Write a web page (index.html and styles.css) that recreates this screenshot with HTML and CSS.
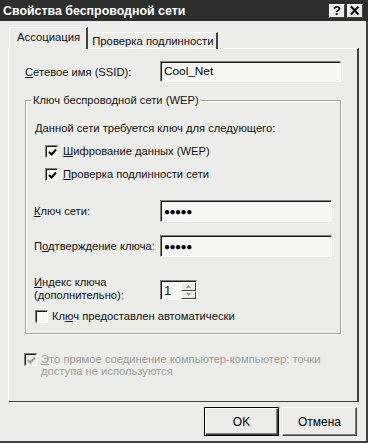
FILE: index.html
```html
<!DOCTYPE html>
<html lang="ru">
<head>
<meta charset="utf-8">
<title>Свойства беспроводной сети</title>
<link rel="stylesheet" href="styles.css">
</head>
<body>
<div class="window">
  <div class="titlebar">
    <span class="title">Свойства беспроводной сети</span>
    <div class="tb-buttons">
      <span class="tb-btn help">?</span>
      <span class="tb-btn close"><svg width="10" height="9" viewBox="0 0 10 9"><path d="M1 0.5 L8.5 8.5 M8.5 0.5 L1 8.5" stroke="#000" stroke-width="2"/></svg></span>
    </div>
  </div>
  <div class="body">
    <div class="tabs">
      <div class="tab active">Ассоциация</div>
      <div class="tab">Проверка подлинности</div>
    </div>
    <div class="panel">
      <div class="row ssid">
        <span class="label"><u>С</u>етевое имя (SSID):</span>
        <span class="input w180">Cool_Net</span>
      </div>
      <fieldset class="group">
        <legend>Ключ беспроводной сети (WEP)</legend>
        <p class="note">Данной сети требуется ключ для следующего:</p>
        <div class="check c1">
          <span class="box"><svg width="9" height="9" viewBox="0 0 9 9"><path d="M1 4 L3.5 6.5 L8 1.5" stroke="#000" stroke-width="2" fill="none"/></svg></span>
          <span class="clabel"><u>Ш</u>ифрование данных (WEP)</span>
        </div>
        <div class="check c2">
          <span class="box"><svg width="9" height="9" viewBox="0 0 9 9"><path d="M1 4 L3.5 6.5 L8 1.5" stroke="#000" stroke-width="2" fill="none"/></svg></span>
          <span class="clabel"><u>П</u>роверка подлинности сети</span>
        </div>
        <div class="row key r1">
          <span class="label klabel"><u>К</u>люч сети:</span>
          <span class="input w172 dots">●●●●●</span>
        </div>
        <div class="row key r2">
          <span class="label klabel">П<u>о</u>дтверждение ключа:</span>
          <span class="input w172 dots">●●●●●</span>
        </div>
        <div class="row index">
          <span class="label klabel two"><u>И</u>ндекс ключа<br>(дополнительно):</span>
          <div class="spinner">
            <span class="spin-text">1</span>
            <div class="spin-btns">
              <span class="spin-btn"><svg width="5" height="3" viewBox="0 0 5 3"><path d="M2.5 0 L5 3 L0 3 Z" fill="#9a9a9a"/></svg></span>
              <span class="spin-btn"><svg width="5" height="3" viewBox="0 0 5 3"><path d="M0 0 L5 0 L2.5 3 Z" fill="#9a9a9a"/></svg></span>
            </div>
          </div>
        </div>
        <div class="check auto">
          <span class="box"></span>
          <span class="clabel">Кл<u>ю</u>ч предоставлен автоматически</span>
        </div>
      </fieldset>
      <div class="check adhoc">
        <span class="box dis"><svg width="9" height="9" viewBox="0 0 9 9"><path d="M1 4 L3.5 6.5 L8 1.5" stroke="#9c9c9c" stroke-width="2" fill="none"/></svg></span>
        <span class="clabel disabled"><u>Э</u>то прямое соединение компьютер-компьютер; точки<br>доступа не используются</span>
      </div>
    </div>
    <div class="buttons">
      <span class="btn default">OK</span>
      <span class="btn">Отмена</span>
    </div>
  </div>
</div>
</body>
</html>
```
FILE: styles.css
```css
html, body {
  margin: 0;
  padding: 0;
  background: #ececea;
}
body {
  width: 368px;
  height: 443px;
  overflow: hidden;
  font-family: "Liberation Sans", Arial, sans-serif;
  font-size: 11.2px;
  color: #111;
}
.window {
  width: 368px;
  height: 443px;
  display: flex;
  flex-direction: column;
}
.titlebar {
  height: 21px;
  flex: 0 0 21px;
  background: #2e2e2e;
  display: flex;
  align-items: center;
  justify-content: space-between;
}
.title {
  color: #fff;
  font-weight: bold;
  font-size: 12.4px;
  padding-left: 3px;
}
.tb-buttons {
  display: flex;
  gap: 2px;
  margin-right: 5px;
}
.tb-btn {
  width: 14px;
  height: 12px;
  background: #ececea;
  border: 1px solid;
  border-color: #fff #404040 #404040 #fff;
  display: flex;
  align-items: center;
  justify-content: center;
  font-weight: bold;
  font-size: 13px;
  line-height: 12px;
  color: #000;
}
.body {
  flex: 1;
  border-right: 2px solid #404040;
  border-bottom: 2px solid #404040;
  display: flex;
  flex-direction: column;
}
.tabs {
  display: flex;
  align-items: flex-end;
  margin-top: 7px;
  padding-left: 9px;
  height: 21px;
  position: relative;
  z-index: 1;
  margin-bottom: -1px;
  font-size: 11.3px;
}
.tab {
  height: 16px;
  padding: 0 3px 0 4px;
  border: 1px solid;
  border-color: #fff #404040 transparent #fff;
  border-bottom: none;
  display: flex;
  align-items: center;
  color: #111;
}
.tab.active {
  height: 21px;
  padding: 0 6px 0 7px;
  background: #ececea;
  border-right: 2px solid #404040;
  align-items: flex-start;
  line-height: 18px;
}
.tab:not(.active) {
  border-left: none;
  border-right: 2px solid #404040;
}
.panel {
  margin-left: 8px;
  width: 348px;
  height: 352px;
  border: 1px solid;
  border-color: #fff #404040 #404040 #fff;
  border-right-width: 2px;
  display: flex;
  flex-direction: column;
}
.row {
  display: flex;
  align-items: center;
}
.label {
  white-space: nowrap;
  flex-shrink: 0;
}
.ssid {
  margin-top: 12px;
  padding-left: 16px;
}
.ssid .label {
  flex: 0 0 135px;
}
.input {
  box-sizing: border-box;
  flex: none;
  height: 21px;
  background: #f6f6f4;
  border: 1px solid;
  border-color: #808080 #fff #fff #808080;
  box-shadow: inset 1px 1px 0 #1a1a1a;
  padding: 2px 0 0 3px;
  line-height: 15px;
  color: #000;
  font-size: 11.8px;
}
.w180 { width: 181px; }
.w172 { width: 172px; height: 22px; }
.dots {
  font-size: 10px;
  letter-spacing: -0.5px;
  line-height: 17px;
  padding-left: 3px;
}
.group {
  margin: 11px 0 0 16px;
  padding: 0 0 10px 0;
  width: 314px;
  border: 1px solid #a2a2a0;
  box-shadow: 1px 1px 0 #fff, inset 1px 1px 0 #fff;
  min-width: 0;
}
.group legend {
  margin-left: 5px;
  padding: 0 2px;
  line-height: 14px;
}
.note {
  margin: 14px 0 0 9px;
  line-height: 14px;
}
.check {
  display: flex;
  align-items: center;
}
.box {
  box-sizing: border-box;
  width: 13px;
  height: 13px;
  flex: 0 0 13px;
  background: #f6f6f4;
  border: 1px solid;
  border-color: #808080 #fff #fff #808080;
  box-shadow: inset 1px 1px 0 #1a1a1a;
  display: flex;
  align-items: center;
  justify-content: center;
  padding: 1px 0 0 1px;
}
.box.dis {
  background: #ececea;
}
.clabel {
  margin-left: 5px;
  line-height: 13px;
}
.c1 { margin-top: 10px; padding-left: 19px; }
.c2 { margin-top: 10px; padding-left: 19px; }
.key .klabel {
  flex: 0 0 126px;
  padding-left: 8px;
}
.r1 { margin-top: 19px; }
.r2 { margin-top: 13px; }
.index {
  margin-top: 19px;
  align-items: flex-start;
}
.klabel.two {
  flex: 0 0 126px;
  padding-left: 8px;
  line-height: 12.5px;
}
.spinner {
  margin-top: 4px;
  box-sizing: border-box;
  width: 37px;
  height: 20px;
  background: #f6f6f4;
  border: 1px solid;
  border-color: #808080 #fff #fff #808080;
  box-shadow: inset 1px 1px 0 #1a1a1a;
  display: flex;
  justify-content: space-between;
}
.spin-text {
  padding: 2px 0 0 3px;
  line-height: 15px;
  font-size: 13px;
}
.spin-btns {
  display: flex;
  flex-direction: column;
  width: 15px;
  margin: 1px 0 0 0;
}
.spin-btn {
  box-sizing: border-box;
  flex: 1;
  border: 1px solid;
  border-color: #fff #404040 #404040 #fff;
  background: #ececea;
  display: flex;
  align-items: center;
  justify-content: center;
}
.auto {
  margin-top: 9px;
  padding-left: 9px;
}
.auto .clabel { margin-left: 4px; }
.adhoc {
  margin-top: 19px;
  padding-left: 15px;
  align-items: flex-start;
}
.adhoc .clabel {
  margin-left: 4px;
  line-height: 12px;
}
.disabled {
  color: #9c9c9a;
}
.buttons {
  display: flex;
  justify-content: flex-end;
  gap: 3px;
  margin-top: 5px;
  padding-right: 9px;
}
.btn {
  box-sizing: border-box;
  width: 75px;
  height: 29px;
  background: #ececea;
  border: 1px solid;
  border-color: #fff #404040 #404040 #fff;
  box-shadow: inset -1px -1px 0 #808080;
  display: flex;
  align-items: center;
  justify-content: center;
  color: #000;
  font-size: 12px;
}
.btn.default {
  border: 1px solid #000;
  box-shadow: inset 1px 1px 0 #fff, inset -1px -1px 0 #404040, inset -2px -2px 0 #808080;
}
u {
  text-decoration: underline;
  text-underline-offset: 1px;
}
```
